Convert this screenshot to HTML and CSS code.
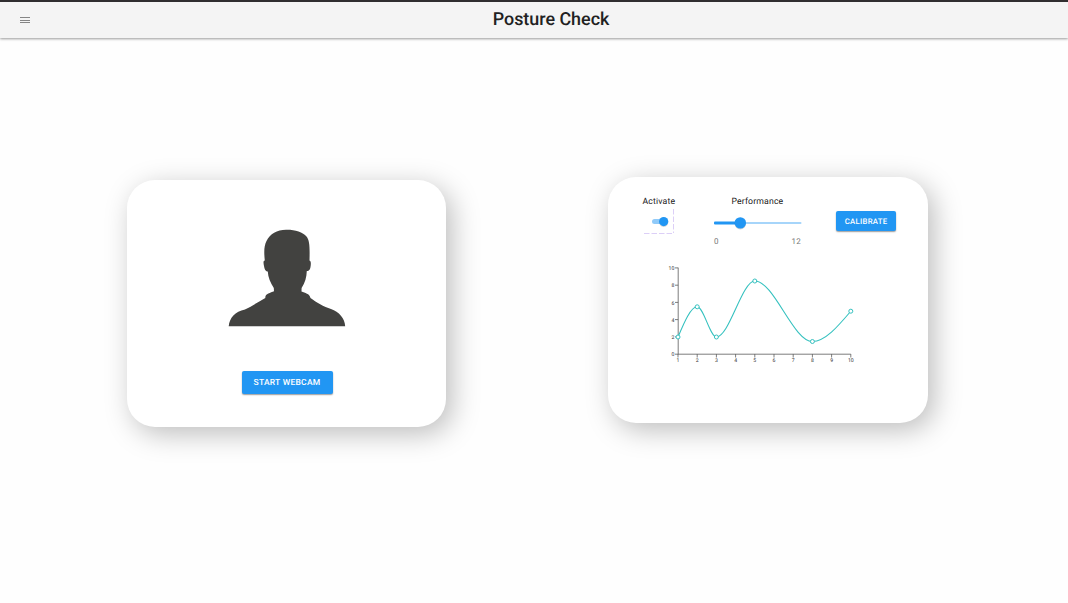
FILE: index.html
```html
<!DOCTYPE html>
<html lang="en">
<head>
<meta charset="utf-8">
<title>Posture Check</title>
<link rel="stylesheet" href="styles.css">
</head>
<body>
<header class="app-bar">
  <button class="menu" aria-label="Menu"><span></span><span></span><span></span></button>
  <h1 class="title">Posture Check</h1>
</header>
<main class="cards">
  <section class="card webcam">
    <svg class="person" width="118" height="98" viewBox="0 0 118 98" role="img" aria-label="Person">
      <path fill="#424240" d="M58 .8C66 .5 75 3 78.500 7.500C81.800 11.500 81.800 19 81.500 31.500C83.300 32 83 36 82.300 39C81.800 41.500 80 42 78.800 42C78.600 48 77 54 73.600 59L73.500 62.500C77 64 81.500 64.500 82.500 69C88 73 96 78 103 80C111 83 116.800 89 117.200 97.200H.7C1.500 89 7 82.500 17 80.500C24 77 31 72.500 37.300 69C37 64.500 42.500 64 46 62.300L45.800 59C42.500 54 40 48 39.800 42.500C37.500 42.500 36.500 40 36 37C35.200 33.500 35.300 31.500 36.800 31.500C36 24 35.800 17 38.500 12C42 5 49 .9 58 .8Z"/>
    </svg>
    <button class="btn btn-start">START WEBCAM</button>
  </section>
  <section class="card panel">
    <div class="controls">
      <div class="activate">
        <div class="label">Activate</div>
        <svg class="switch" width="32" height="26" viewBox="0 0 32 26" role="img" aria-label="On">
          <path d="M30.500 0V24M1 24.500H30" fill="none" stroke="#dccff7" stroke-dasharray="5.500 2"/>
          <rect x="9" y="10" width="15" height="5" rx="2.500" fill="#90caf9"/>
          <circle cx="20.700" cy="13.400" r="4.600" fill="#000" opacity=".14"/>
          <circle cx="20.700" cy="12.600" r="4.600" fill="#2196f3"/>
        </svg>
      </div>
      <div class="performance">
        <div class="label">Performance</div>
        <svg class="slider" width="88" height="14" viewBox="0 0 88 14" role="img" aria-label="Slider">
          <rect x="0" y="6" width="87.500" height="2" rx="1" fill="#a6d5fa"/>
          <rect x="0" y="5.500" width="27" height="3" rx="1" fill="#2196f3"/>
          <circle cx="26.300" cy="7.800" r="5.700" fill="#000" opacity=".16"/>
          <circle cx="26.300" cy="6.900" r="5.700" fill="#2196f3"/>
        </svg>
        <div class="range"><span>0</span><span>12</span></div>
      </div>
      <button class="btn btn-calibrate">CALIBRATE</button>
    </div>
    <svg class="chart" width="200" height="110" viewBox="0 0 200 110">
      <g transform="translate(18 8)">
        <path class="axis" d="M.2 -.3V86.300M-3 -.1H.2M-3 17.200H.2M-3 34.400H.2M-3 51.600H.2M-3 68.900H.2M-3 86.200H172.800M0 86V89.500M19.200 86V89.500M38.400 86V89.500M57.600 86V89.500M76.800 86V89.500M96 86V89.500M115.200 86V89.500M134.400 86V89.500M153.600 86V89.500M172.800 86V89.500"/>
        <g class="ticks" text-anchor="end">
          <text x="-3.600" y="2">10</text><text x="-3.600" y="19.300">8</text><text x="-3.600" y="36.500">6</text><text x="-3.600" y="53.700">4</text><text x="-3.600" y="71">2</text><text x="-3.600" y="88.300">0</text>
        </g>
        <g class="ticks" text-anchor="middle">
          <text x="0" y="94.300">1</text><text x="19.200" y="94.300">2</text><text x="38.400" y="94.300">3</text><text x="57.600" y="94.300">4</text><text x="76.800" y="94.300">5</text><text x="96" y="94.300">6</text><text x="115.200" y="94.300">7</text><text x="134.400" y="94.300">8</text><text x="153.600" y="94.300">9</text><text x="172.800" y="94.300">10</text>
        </g>
        <g class="series">
          <path d="M0 69C6.400 53.900 12.800 38.800 19.200 38.800S32 69 38.400 69C51.200 69 64 13 76.800 13C96 13 115.200 73.500 134.400 73.500C147.200 73.500 160 58.300 172.800 43.200"/>
          <circle cx="0" cy="69" r="2"/><circle cx="19.200" cy="38.800" r="2"/><circle cx="38.400" cy="69" r="2"/><circle cx="76.800" cy="13" r="2"/><circle cx="134.400" cy="73.500" r="2"/><circle cx="172.800" cy="43.200" r="2"/>
        </g>
      </g>
    </svg>
  </section>
</main>
</body>
</html>
```

FILE: styles.css
```css
* { box-sizing: border-box; }
body {
  margin: 0;
  height: 603px;
  overflow: hidden;
  background: #fefefe;
  color: #212121;
  font-family: Roboto, sans-serif;
  text-rendering: geometricPrecision;
}
button { border: 0; padding: 0; font-family: inherit; text-rendering: inherit; }
.app-bar {
  display: grid;
  grid-template-columns: 40px 1fr 40px;
  align-items: center;
  height: 38px;
  padding: 0 17px;
  border-top: 2px solid #302e30;
  background: #f4f4f4;
  box-shadow: 0 1px 2.500px rgba(0, 0, 0, .4);
}
.menu {
  display: flex;
  flex-direction: column;
  gap: 1.500px;
  width: 10px;
  margin-left: 3px;
  background: none;
}
.menu span { height: 1px; background: #858585; }
.title {
  margin: 0;
  padding-left: 34px;
  text-align: center;
  font-size: 17.900px;
  font-weight: 500;
  line-height: 34px;
}
.cards {
  display: flex;
  align-items: flex-start;
  gap: 162px;
  padding: 138.500px 0 0 126.500px;
}
.card {
  width: 319.500px;
  height: 246.500px;
  border-radius: 28px;
  background: #fff;
  box-shadow: 6px 7px 28px rgba(0, 0, 0, .26);
}
.webcam {
  display: flex;
  flex-direction: column;
  align-items: center;
  margin-top: 3.500px;
  padding: 49px 0 0 1.500px;
}
.btn {
  border-radius: 2px;
  background: #2196f3;
  color: #fff;
  font-weight: 500;
  box-shadow: 0 1px 1.500px rgba(0, 0, 0, .4);
}
.btn-start {
  width: 91px;
  height: 23px;
  margin: 44px 0 0;
  padding-top: 1px;
  font-size: 8.500px;
  letter-spacing: .250px;
}
.btn-calibrate {
  width: 60.500px;
  height: 20px;
  margin: 16.500px 0 0 34px;
  font-size: 7.800px;
  letter-spacing: .270px;
}
.panel { padding: 18px 0 0 33.900px; }
.controls {
  display: flex;
  align-items: flex-start;
  height: 65px;
}
.activate { width: 34px; margin-right: 38px; }
.performance { width: 88px; }
.label {
  height: 14px;
  padding-top: 1px;
  font-size: 8.700px;
  line-height: 13px;
  letter-spacing: .150px;
  text-align: center;
  white-space: nowrap;
}
.switch { display: block; margin: .500px 0 0 1px; }
.performance .label { padding-right: 1px; }
.slider { display: block; margin-top: 7.500px; }
.range {
  display: flex;
  justify-content: space-between;
  width: 87px;
  margin-top: 6.500px;
  font-size: 8px;
  line-height: 10px;
  color: #777;
  letter-spacing: .150px;
}
.chart { display: block; margin: .500px 0 0 17.700px; }
.axis { fill: none; stroke: #666; stroke-width: .850; }
.ticks { font-size: 5.200px; fill: #333; }
.series { fill: none; stroke: #35c1bf; stroke-width: 1.100; }
.series circle { fill: #fff; stroke-width: 1; }
```
